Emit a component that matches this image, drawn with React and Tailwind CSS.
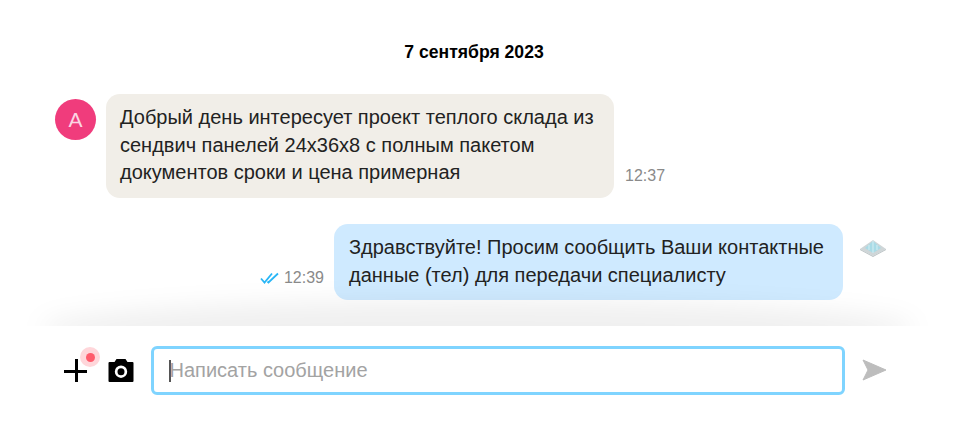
import React from 'react';

const font = { fontFamily: '"Liberation Sans", Arial, sans-serif' };

const Checks = () => (
    <svg width="20" height="12" viewBox="0 0 20 12" fill="none" stroke="#29b6f6" strokeWidth="1.8">
        <path d="M1 6.5 L4.5 10.5 L12 1.5" />
        <path d="M7.5 9.5 L8.5 10.5 L18 1.5" />
    </svg>
);

const Camera = () => (
    <svg width="26" height="24" viewBox="0 0 26 24">
        <path fillRule="evenodd" fill="#000" d="M8.5 1 H17.5 L19.5 4 H24.5 Q25.5 4 25.5 5 V23 Q25.5 24 24.5 24 H1.5 Q.5 24 .5 23 V5 Q.5 4 1.5 4 H6.5 Z M13 7.5 A6.2 6.2 0 1 0 13 19.9 A6.2 6.2 0 1 0 13 7.5 Z M13 10.2 A3.5 3.5 0 1 1 13 17.2 A3.5 3.5 0 1 1 13 10.2 Z" />
    </svg>
);

// small isometric logo in the operator's avatar
const Logo = () => (
    <svg width="30" height="20" viewBox="0 0 30 20">
        <path d="M15 2 L28 11 L15 18 L2 11 Z" fill="#cfd6d8" />
        <path d="M15 3 L23 10 L15 15 L7 10 Z" fill="#a9dbe6" />
        <path d="M15 3 V15 M11 7 V12 M19 7 V12" stroke="#d6eef3" strokeWidth="1" />
        <path d="M2 11 L15 18 L28 11 L28 12 L15 19 L2 12 Z" fill="#b9c1c3" />
    </svg>
);

export default function App() {
    return (
        <div style={font} className="w-[955px] h-[440px] bg-white flex flex-col overflow-hidden text-[#222]">
            <div className="h-[326px] shrink-0 relative overflow-hidden">
                <div className="pt-[42px] text-center text-[17.6px] leading-[20px] font-bold text-black pr-[7px]">7 сентября 2023</div>

                <div className="flex items-start mt-[32px] pl-[55px]">
                    <div className="w-[41px] h-[41px] mt-[5px] rounded-full bg-[#f03c7c] text-[#fbd5e3] flex items-center justify-center text-[21px]">A</div>
                    <div className="ml-[10px] w-[508px] h-[104px] bg-[#f1eee8] rounded-[14px] px-[14px] pt-[10px] text-[20px] leading-[27.6px]">
                        Добрый день интересует проект теплого склада из сендвич панелей 24х36х8 с полным пакетом документов сроки и цена примерная
                    </div>
                    <div className="ml-[11px] mt-[73px] text-[16px] leading-[18px] text-[#8a8a8a]">12:37</div>
                </div>

                <div className="flex items-start justify-end mt-[26px] pr-[67px]">
                    <div className="flex items-center gap-[4px] mt-[45px] mr-[10px] text-[16px] leading-[18px] text-[#8a8a8a]">
                        <Checks />
                        <span>12:39</span>
                    </div>
                    <div className="w-[509px] h-[76px] bg-[#cfeaff] rounded-[14px] px-[15px] pt-[10px] text-[20px] leading-[27.6px]">
                        Здравствуйте! Просим сообщить Ваши контактные данные (тел) для передачи специалисту
                    </div>
                    <div className="ml-[15px] mt-[14px]"><Logo /></div>
                </div>

                <div className="absolute left-[40px] right-[40px] bottom-[-30px] h-[56px] rounded-[50%] bg-[#000]/[0.06] blur-[12px]" />
            </div>

            <div className="flex-1 bg-white flex items-start pt-[20px] relative">
                <div className="relative w-[30px] h-[30px] ml-[61px] mt-[11px]">
                    <div className="absolute left-[3px] top-[13px] w-[23px] h-[2.5px] bg-black" />
                    <div className="absolute left-[14px] top-[2px] w-[2.5px] h-[23px] bg-black" />
                    <div className="absolute left-[19px] top-[-10px] w-[20px] h-[20px] rounded-full bg-[#ffd6da] flex items-center justify-center">
                        <div className="w-[9px] h-[9px] rounded-full bg-[#ff5c6c]" />
                    </div>
                </div>
                <div className="ml-[17px] mt-[12px]"><Camera /></div>
                <div className="ml-[17px] w-[694px] h-[49px] rounded-[6px] border-[3px] border-[#7fd4ff] flex items-center pl-[15px] text-[20px] text-[#a3a3a3]">
                    <span className="w-[1.5px] h-[22px] bg-[#555] -mr-[1px]" />
                    <span className="-translate-y-[1px]">Написать сообщение</span>
                </div>
                <svg className="ml-[17px] mt-[13px]" width="25" height="22" viewBox="0 0 25 22">
                    <path d="M1 1 L24 11 L1 21 L6 11 Z" fill="#bdbdbd" stroke="#bdbdbd" strokeLinejoin="round" />
                </svg>
            </div>
        </div>
    );
}
